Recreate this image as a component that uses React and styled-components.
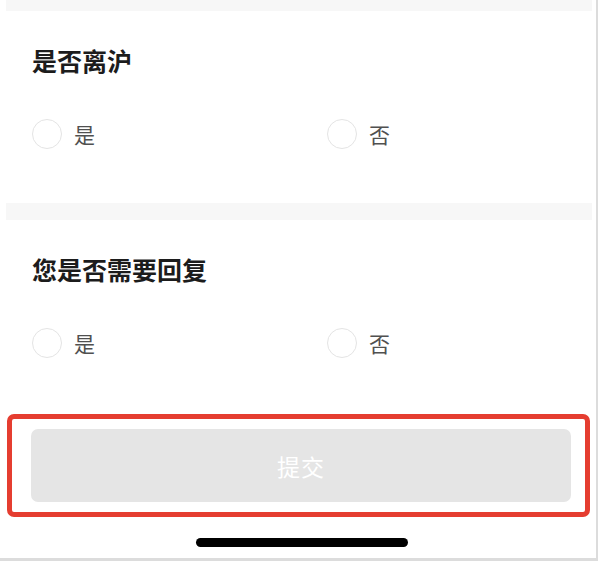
import React from "react"
import styled, { createGlobalStyle } from "styled-components"

const GlobalStyle = createGlobalStyle`
  * { box-sizing: border-box; }
  body {
    margin: 0;
    background: #fff;
    font-family: "Noto Sans CJK SC", "Noto Sans", sans-serif;
  }
`

const Frame = styled.div`
  width: 598px;
  height: 561px;
  border-right: 2px solid #dcdcdc;
  border-bottom: 3px solid #dcdcdc;
  display: flex;
  flex-direction: column;
  overflow: hidden;
`

const Band = styled.div`
  height: ${(p) => p.$h}px;
  margin-left: 6px;
  margin-right: 4px;
  background: #f7f7f7;
  flex-shrink: 0;
`

const Section = styled.section`
  padding: 34px 0 ${(p) => p.$bottom}px 32px;
`

const Title = styled.h2`
  margin: 0;
  font-size: 25px;
  line-height: 30px;
  font-weight: 700;
  color: #1c1c1c;
`

const Options = styled.div`
  margin-top: 44px;
  display: grid;
  grid-template-columns: 295px 1fr;
`

const Option = styled.label`
  display: flex;
  align-items: center;
  gap: 12px;
  font-size: 21px;
  line-height: 30px;
  color: #505050;
`

const Circle = styled.span`
  width: 30px;
  height: 30px;
  border-radius: 50%;
  border: 1.5px solid #e4e4e4;
  flex-shrink: 0;
`

const Footer = styled.div`
  margin: 0 6px 0 7px;
  border: 5px solid #e53d30;
  border-radius: 7px;
  padding: 10px 14px 10px 19px;
`

const SubmitButton = styled.button`
  width: 100%;
  height: 73px;
  border: none;
  border-radius: 7px;
  background: #e5e5e5;
  color: #fff;
  font-family: inherit;
  font-size: 23px;
  letter-spacing: 1px;
`

const HomeArea = styled.div`
  display: flex;
  justify-content: center;
  padding: 21px 0 0 7px;
`

const HomeBar = styled.div`
  width: 212px;
  height: 9px;
  border-radius: 5px;
  background: #000;
`

function Question({ title, bandHeight, bottom }) {
  return (
    <>
      <Band $h={bandHeight} />
      <Section $bottom={bottom}>
        <Title>{title}</Title>
        <Options>
          <Option>
            <Circle />是
          </Option>
          <Option>
            <Circle />否
          </Option>
        </Options>
      </Section>
    </>
  )
}

export default function App() {
  return (
    <>
      <GlobalStyle />
      <Frame>
        <Question title="是否离沪" bandHeight={11} bottom={54} />
        <Question title="您是否需要回复" bandHeight={17} bottom={56} />
        <Footer>
          <SubmitButton>提交</SubmitButton>
        </Footer>
        <HomeArea>
          <HomeBar />
        </HomeArea>
      </Frame>
    </>
  )
}
